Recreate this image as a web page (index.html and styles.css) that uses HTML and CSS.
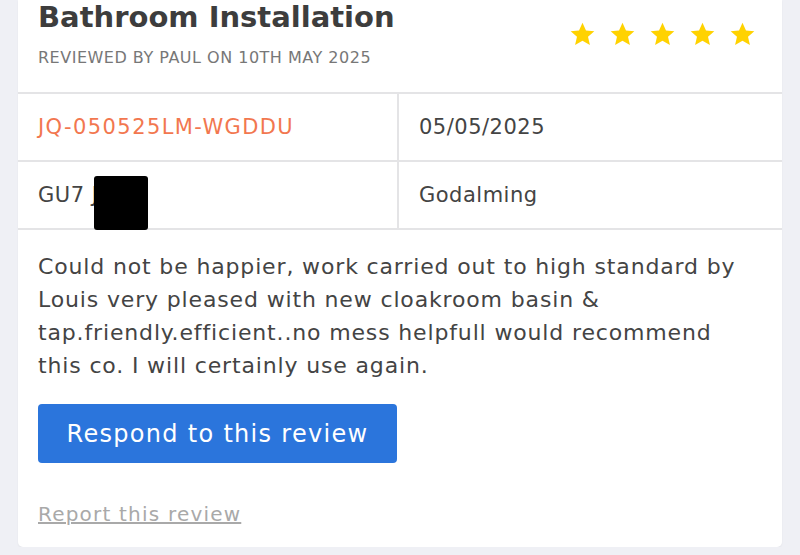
FILE: index.html
```html
<!DOCTYPE html>
<html lang="en">
<head>
    <meta charset="UTF-8">
    <meta name="viewport" content="width=device-width, initial-scale=1.0">
    <title>Review</title>
    <link rel="stylesheet" href="styles.css">
</head>
<body>
    <div class="review-card">
        <div class="review-head">
            <div>
                <h2>Bathroom Installation</h2>
                <p class="reviewed-by">Reviewed by Paul on 10th May 2025</p>
            </div>
            <div class="stars">
                <svg viewBox="0 0 24 24"><path d="M12 1.5l3.1 7 7.4.6-5.6 4.9 1.7 7.4L12 17.5l-6.6 3.9 1.7-7.4L1.5 9.1l7.4-.6z"/></svg>
                <svg viewBox="0 0 24 24"><path d="M12 1.5l3.1 7 7.4.6-5.6 4.9 1.7 7.4L12 17.5l-6.6 3.9 1.7-7.4L1.5 9.1l7.4-.6z"/></svg>
                <svg viewBox="0 0 24 24"><path d="M12 1.5l3.1 7 7.4.6-5.6 4.9 1.7 7.4L12 17.5l-6.6 3.9 1.7-7.4L1.5 9.1l7.4-.6z"/></svg>
                <svg viewBox="0 0 24 24"><path d="M12 1.5l3.1 7 7.4.6-5.6 4.9 1.7 7.4L12 17.5l-6.6 3.9 1.7-7.4L1.5 9.1l7.4-.6z"/></svg>
                <svg viewBox="0 0 24 24"><path d="M12 1.5l3.1 7 7.4.6-5.6 4.9 1.7 7.4L12 17.5l-6.6 3.9 1.7-7.4L1.5 9.1l7.4-.6z"/></svg>
            </div>
        </div>

        <div class="job-table">
            <div class="cell job-ref">JQ-050525LM-WGDDU</div>
            <div class="cell">05/05/2025</div>
            <div class="cell postcode">GU7 J<span class="redact"></span></div>
            <div class="cell">Godalming</div>
        </div>

        <div class="review-body">
            <p class="review-text">Could not be happier, work carried out to high standard by Louis very pleased with new cloakroom basin &amp; tap.friendly.efficient..no mess helpfull would recommend this co. I will certainly use again.</p>
            <button class="respond-btn">Respond to this review</button>
            <a href="#" class="report-link">Report this review</a>
        </div>
    </div>
</body>
</html>
```

FILE: styles.css
```css
body {
    font-family: "DejaVu Sans", Arial, sans-serif;
    background-color: #eff0f5;
    margin: 0;
    padding: 0;
}

.review-card {
    background: #ffffff;
    margin: 0 18px;
    border-radius: 0 0 5px 5px;
    box-shadow: 0 1px 2px rgba(0, 0, 0, 0.05);
}

.review-head {
    display: flex;
    justify-content: space-between;
    padding: 0 26px 0 20px;
    height: 92px;
}

h2 {
    margin: 0;
    font-size: 29px;
    line-height: 34px;
    font-weight: 600;
    color: #3d3d3d;
}

.reviewed-by {
    margin: 14px 0 0;
    font-size: 16px;
    letter-spacing: 0.5px;
    text-transform: uppercase;
    color: #777;
}

.stars {
    display: flex;
    gap: 13px;
    padding-top: 21px;
}

.stars svg {
    width: 27px;
    height: 27px;
    fill: #ffd200;
}

.job-table {
    display: grid;
    grid-template-columns: 381px 1fr;
    border-top: 2px solid #e4e4e6;
}

.cell {
    height: 66px;
    display: flex;
    align-items: center;
    padding: 0 20px;
    font-size: 21px;
    letter-spacing: 0.5px;
    color: #444;
    border-bottom: 2px solid #e4e4e6;
}

.cell:nth-child(odd) {
    border-right: 2px solid #e4e4e6;
}

.job-ref {
    color: #f2774f;
    letter-spacing: 1.4px;
}

.postcode {
    position: relative;
}

.redact {
    position: absolute;
    left: 76px;
    top: 14px;
    width: 54px;
    height: 54px;
    background: #000;
    border-radius: 3px;
}

.review-body {
    padding: 20px 20px 21px;
}

.review-text {
    margin: 0;
    font-size: 22px;
    line-height: 33px;
    letter-spacing: 0.85px;
    color: #444;
}

.respond-btn {
    display: block;
    margin-top: 22px;
    width: 359px;
    height: 59px;
    border: none;
    border-radius: 4px;
    background-color: #2b75dc;
    color: white;
    font-family: inherit;
    font-size: 24px;
    letter-spacing: 1.3px;
    cursor: pointer;
}

.report-link {
    display: inline-block;
    margin-top: 39px;
    font-size: 20px;
    letter-spacing: 1.2px;
    color: #a9a9a9;
}
```
